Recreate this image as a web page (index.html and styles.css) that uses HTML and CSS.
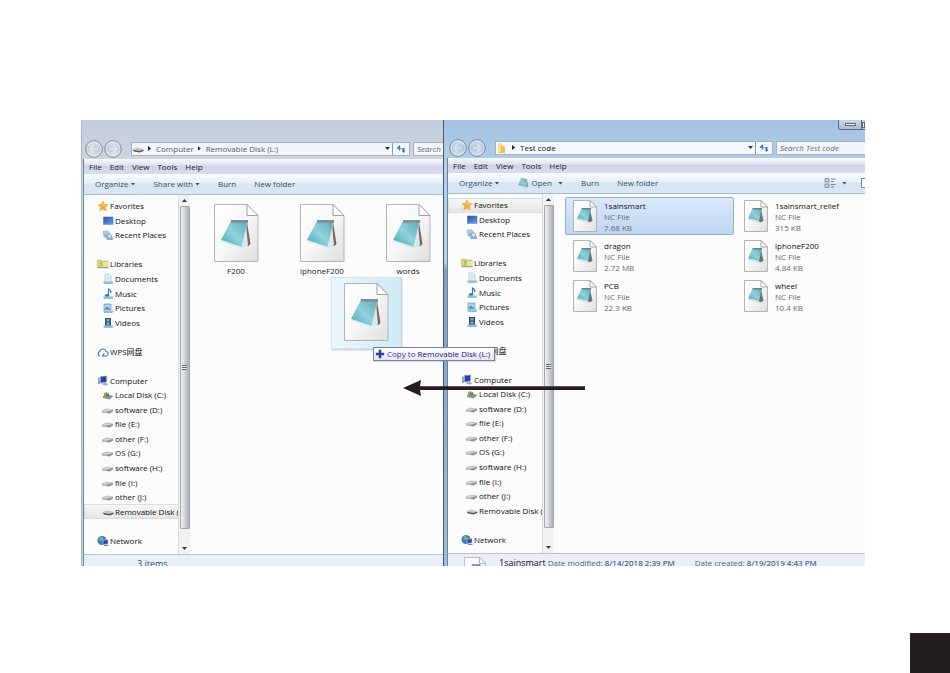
FILE: index.html
```html
<!DOCTYPE html>
<html lang="en">
<head>
<meta charset="utf-8">
<title>Copy to Removable Disk</title>
<link rel="stylesheet" href="styles.css">
</head>
<body>
<svg class="defs" aria-hidden="true">
  <defs>
    <linearGradient id="paper" x1="0" y1="0" x2="1" y2="1"><stop offset="0" stop-color="#fff"/><stop offset=".5" stop-color="#f7f7f7"/><stop offset="1" stop-color="#dedede"/></linearGradient>
    <linearGradient id="pad" x1="1" y1="0" x2="0" y2="1"><stop offset="0" stop-color="#5fa9b6"/><stop offset=".5" stop-color="#90d2dc"/><stop offset="1" stop-color="#4aa5b5"/></linearGradient>
    <linearGradient id="ring" x1="0" y1="0" x2="0" y2="1"><stop offset="0" stop-color="#fff" stop-opacity=".5"/><stop offset=".5" stop-color="#b5c2d0" stop-opacity=".4"/><stop offset="1" stop-color="#fff" stop-opacity=".5"/></linearGradient>
    <linearGradient id="screen" x1="0" y1="0" x2="1" y2="1"><stop offset="0" stop-color="#234fae"/><stop offset="1" stop-color="#6a9be8"/></linearGradient>
  </defs>
  <symbol id="i-file" viewBox="0 0 46 60">
    <path d="M1.500 1.500H34L45 13V58.500H1.500Z" fill="url(#paper)" stroke="#b4b4b4"/>
    <path d="M34 1.500V12.500H45Z" fill="#fff" stroke="#a0a0a0"/>
    <path d="M34 19L37.500 41L35.500 43L31 42Z" fill="#7a675a"/>
    <path d="M33 21L35 42L30 45L26 42Z" fill="#d9e8ea"/>
    <path d="M18 18L34 20L28.500 44L8 37Z" fill="url(#pad)"/>
    <path d="M8 37L28.500 44L28 45.500L8 38.500Z" fill="#d6eef2"/>
    <path d="M18 17H35V20L18 19.500Z" fill="#7f8f92"/>
  </symbol>
  <symbol id="i-tile" viewBox="0 0 24 32">
    <path d="M.5 .5H17L23.500 7V31.500H.5Z" fill="url(#paper)" stroke="#b4b4b4"/>
    <path d="M17 .5V7H23.500Z" fill="#fff" stroke="#a9a9a9"/>
    <path d="M17 9L19.500 21L16 22.500L14 20Z" fill="#66777a"/>
    <path d="M8.500 8.500L17.500 9.500L15 21L4 18.500Z" fill="url(#pad)"/>
    <path d="M4 18.500L15 21L14 23L5 20Z" fill="#c9e6ea"/>
    <path d="M8.500 8H18V10L8.500 9Z" fill="#6c8286"/>
  </symbol>
  <symbol id="i-note" viewBox="0 0 12 12"><path d="M4 1L10 2L8 10L1 8Z" fill="url(#pad)"/><path d="M10 2L11.500 10L8 10.500Z" fill="#8aa5ab"/></symbol>
  <symbol id="i-star" viewBox="0 0 12 12"><path d="M6 1L7.500 4.500L11 4.800L8.400 7.200L9.200 10.800L6 9L2.800 10.800L3.600 7.200L1 4.800L4.500 4.500Z" fill="#f7ad2e" stroke="#e29a35" stroke-width=".5"/><path d="M6 2.500L7 5H9.500L6 6Z" fill="#ffdd72"/></symbol>
  <symbol id="i-desktop" viewBox="0 0 12 12"><path d="M1.500 2H11V9.500H1.500Z" fill="url(#screen)" stroke="#4674bd" stroke-width=".6"/><path d="M1.500 8.800H11V9.800H1.500Z" fill="#8aaee0"/></symbol>
  <symbol id="i-recent" viewBox="0 0 12 12"><path d="M1 2H6L8 5V8H2Z" fill="#aacbe0" stroke="#8fb0c4" stroke-width=".6"/><path d="M3 6H9L11 10.500H5Z" fill="#91b9d2" stroke="#6b97b0" stroke-width=".6"/><circle cx="7.500" cy="7" r="2" fill="#dceef6" stroke="#6b97ae" stroke-width=".6"/></symbol>
  <symbol id="i-libs" viewBox="0 0 12 12"><path d="M.5 2H4L5 3H11V10H.5Z" fill="#f0cf62" stroke="#d3b354" stroke-width=".6"/><path d="M3 3.500H9V8H3Z" fill="#9ecb85"/><path d="M6 4H11.500V10H6Z" fill="#f6e48e"/><path d="M1 9.500H11.500" stroke="#69b1d0"/></symbol>
  <symbol id="i-docs" viewBox="0 0 12 12"><path d="M3 1H7L9 3V9H3Z" fill="#eaf2fb" stroke="#a5bbd3" stroke-width=".7"/><path d="M4.500 4H7.500M4.500 6H7.500" stroke="#a5bbd3" stroke-width=".6"/><path d="M1 8.500H11.500L10.500 11H2Z" fill="#93bfdb"/></symbol>
  <symbol id="i-music" viewBox="0 0 12 12"><path d="M6.500 8V1Q9 2 9 5" fill="none" stroke="#2879bd" stroke-width="1.200"/><ellipse cx="5" cy="7.500" rx="2.200" ry="1.600" fill="#2879bd"/><path d="M1 8.500H11.500L10.500 11H2Z" fill="#93bfdb"/></symbol>
  <symbol id="i-pics" viewBox="0 0 12 12"><path d="M2 2H9V8H2Z" fill="#a9d5ef" stroke="#6794ba" stroke-width=".7"/><path d="M2.500 7.500L5 4.500L8.500 7.500Z" fill="#4c8cb4"/><path d="M1 8.500H11.500L10.500 11H2Z" fill="#93bfdb"/></symbol>
  <symbol id="i-vids" viewBox="0 0 12 12"><path d="M3 1H9V9H3Z" fill="#2e5269"/><path d="M4.500 2H7.500V4.500H4.500ZM4.500 5.500H7.500V8H4.500Z" fill="#79a8c4"/><path d="M1 8.500H11.500L10.500 11H2Z" fill="#93bfdb"/></symbol>
  <symbol id="i-cloud" viewBox="0 0 12 12"><path d="M3 10A2.300 2.300 0 0 1 2.600 5.600A3.500 3.500 0 0 1 9.300 5.400A2.400 2.400 0 0 1 9.500 10H5.500L7.300 7.300" fill="none" stroke="#3778cf" stroke-width="1.100"/></symbol>
  <symbol id="i-pc" viewBox="0 0 12 12"><path d="M1 2.500H3V9H1Z" fill="#8fa7c9"/><path d="M3.500 1.500L9.500 1V7L3.500 8Z" fill="#2742a2" stroke="#8ea2d2" stroke-width=".6"/><path d="M6 7.500H8.500L11.500 9.500L8 10.500L5 9.500Z" fill="#9daec8"/></symbol>
  <symbol id="i-sys" viewBox="0 0 12 12"><path d="M1 7L5 5L11.500 7L7.500 10.500L1 9Z" fill="#8b9590"/><path d="M2 4L5 3L6 6L2 7Z" fill="#b79b43"/><path d="M4 5L7 4V7L4 7.500Z" fill="#548d57"/><circle cx="9" cy="8.300" r=".7" fill="#4c7"/></symbol>
  <symbol id="i-drive" viewBox="0 0 12 12"><path d="M.5 6.500L5 5L11 6L7.500 8.500L.5 8Z" fill="#d6d6d6" stroke="#a3a3a3" stroke-width=".6"/><path d="M5.500 7.500L11 6V7.500L7.500 9.500L.5 8.500V7.500Z" fill="#929292"/><path d="M1.500 7.800L4.500 8.200" stroke="#fff" stroke-width=".6"/></symbol>
  <symbol id="i-usb" viewBox="0 0 12 12"><path d="M.5 6L5 4.500L11.500 6L7.500 8.500Z" fill="#c6c6c6"/><path d="M.5 6.500L7 8L11.500 6.500V8L7.500 9.500L2 8.500Z" fill="#555"/></symbol>
  <symbol id="i-net" viewBox="0 0 12 12"><circle cx="5" cy="5.500" r="4.500" fill="#3f78c0"/><path d="M2 3Q5 0 6 3T3 6Z" fill="#6cb976"/><path d="M6 5L11 4.500V9L6 9.500Z" fill="#24479f" stroke="#b8cae4" stroke-width=".7"/><path d="M7 10H11.500V11H7Z" fill="#7189ae"/></symbol>
  <symbol id="i-folder" viewBox="0 0 12 12"><path d="M2 1H6V11H2Z" fill="#f6e28c"/><path d="M5 3L9 5V11H2L5 9Z" fill="#e9c14b"/></symbol>
  <symbol id="i-back" viewBox="0 0 18 18"><circle cx="9" cy="9" r="8.300" fill="url(#ring)" stroke="#7f8f9f"/><circle cx="9" cy="9" r="7" fill="none" stroke="#fff" stroke-opacity=".4"/><path d="M13 9H5M8.500 5.500L5 9L8.500 12.500" fill="none" stroke="#fff" stroke-opacity=".4" stroke-width="2"/></symbol>
  <symbol id="i-fwd" viewBox="0 0 18 18"><circle cx="9" cy="9" r="8.300" fill="url(#ring)" stroke="#7f8f9f"/><circle cx="9" cy="9" r="7" fill="none" stroke="#fff" stroke-opacity=".4"/><path d="M5 9H13M9.500 5.500L13 9L9.500 12.500" fill="none" stroke="#fff" stroke-opacity=".4" stroke-width="2"/></symbol>
  <symbol id="i-refresh" viewBox="0 0 12 12"><path d="M4.500 3V7.500" fill="none" stroke="#3475bd" stroke-width="1.200"/><path d="M1.500 5.500L4.500 2V5.500Z" fill="#3475bd"/><path d="M2 5.500H6M6 6H10" stroke="#5a8cc8"/><path d="M8.500 5V8" stroke="#2f62a6" stroke-width="1.200"/><path d="M7 7.500H10.500L8.500 10Z" fill="#2f62a6"/></symbol>
  <symbol id="i-view" viewBox="0 0 12 12"><path d="M1 1.500H5V5H1ZM1 7H5V10.500H1Z" fill="#c3d0de" stroke="#71859b" stroke-width=".8"/><path d="M7 2H11.500M7 4.500H10M7 7.500H11.500M7 10H10" stroke="#71859b"/></symbol>
  <symbol id="i-plus" viewBox="0 0 12 12"><path d="M4.500 1H7.500V4.500H11V7.500H7.500V11H4.500V7.500H1V4.500H4.500Z" fill="#2a3e96"/></symbol>
</svg>

<main class="desktop">
  <section class="window" aria-label="Removable Disk (L:)">
    <header class="address-row">
      <button class="nav" aria-label="Back"><svg><use href="#i-back"/></svg></button>
      <button class="nav" aria-label="Forward"><svg><use href="#i-fwd"/></svg></button>
      <div class="address">
        <svg class="icon"><use href="#i-usb"/></svg><i class="caret-right"></i><a href="#">Computer</a><i class="caret-right"></i><a href="#">Removable Disk (L:)</a>
        <i class="caret-down push"></i>
        <button class="refresh" aria-label="Refresh"><svg class="icon"><use href="#i-refresh"/></svg></button>
      </div>
      <input class="search" type="text" aria-label="Search disk" placeholder="Search">
    </header>
    <nav class="menu"><button>File</button><button>Edit</button><button>View</button><button>Tools</button><button>Help</button></nav>
    <div class="toolbar">
      <button>Organize<i class="caret-down"></i></button><button>Share with<i class="caret-down"></i></button><button>Burn</button><button>New folder</button>
    </div>
    <div class="content">
      <nav class="tree">
        <a class="top" href="#"><svg class="icon"><use href="#i-star"/></svg>Favorites</a>
        <a href="#"><svg class="icon"><use href="#i-desktop"/></svg>Desktop</a>
        <a href="#"><svg class="icon"><use href="#i-recent"/></svg>Recent Places</a>
        <span></span>
        <a class="top" href="#"><svg class="icon"><use href="#i-libs"/></svg>Libraries</a>
        <a href="#"><svg class="icon"><use href="#i-docs"/></svg>Documents</a>
        <a href="#"><svg class="icon"><use href="#i-music"/></svg>Music</a>
        <a href="#"><svg class="icon"><use href="#i-pics"/></svg>Pictures</a>
        <a href="#"><svg class="icon"><use href="#i-vids"/></svg>Videos</a>
        <span></span>
        <a class="top" href="#"><svg class="icon"><use href="#i-cloud"/></svg>WPS网盘</a>
        <span></span>
        <a class="top" href="#"><svg class="icon"><use href="#i-pc"/></svg>Computer</a>
        <a href="#"><svg class="icon"><use href="#i-sys"/></svg>Local Disk (C:)</a>
        <a href="#"><svg class="icon"><use href="#i-drive"/></svg>software (D:)</a>
        <a href="#"><svg class="icon"><use href="#i-drive"/></svg>file (E:)</a>
        <a href="#"><svg class="icon"><use href="#i-drive"/></svg>other (F:)</a>
        <a href="#"><svg class="icon"><use href="#i-drive"/></svg>OS (G:)</a>
        <a href="#"><svg class="icon"><use href="#i-drive"/></svg>software (H:)</a>
        <a href="#"><svg class="icon"><use href="#i-drive"/></svg>file (I:)</a>
        <a href="#"><svg class="icon"><use href="#i-drive"/></svg>other (J:)</a>
        <a class="current" href="#"><svg class="icon"><use href="#i-usb"/></svg>Removable Disk (</a>
        <span></span>
        <a class="top" href="#"><svg class="icon"><use href="#i-net"/></svg>Network</a>
      </nav>
      <div class="scroll"><i class="caret-up"></i><div class="thumb"><b></b></div><i class="caret-down"></i></div>
      <div class="icons">
        <figure><svg><use href="#i-file"/></svg><figcaption>F200</figcaption></figure>
        <figure><svg><use href="#i-file"/></svg><figcaption>iphoneF200</figcaption></figure>
        <figure><svg><use href="#i-file"/></svg><figcaption>words</figcaption></figure>
      </div>
    </div>
    <footer class="status"><span class="count">3 items</span></footer>
  </section>

  <section class="window active" aria-label="Test code">
    <div class="caption"><button aria-label="Minimize"><i class="min"></i></button><button aria-label="Maximize"><i class="max"></i></button></div>
    <header class="address-row">
      <button class="nav" aria-label="Back"><svg><use href="#i-back"/></svg></button>
      <button class="nav" aria-label="Forward"><svg><use href="#i-fwd"/></svg></button>
      <div class="address">
        <svg class="icon"><use href="#i-folder"/></svg><i class="caret-right"></i><a href="#">Test code</a>
        <i class="caret-down push"></i>
        <button class="refresh" aria-label="Refresh"><svg class="icon"><use href="#i-refresh"/></svg></button>
      </div>
      <input class="search" type="text" aria-label="Search Test code" placeholder="Search Test code">
    </header>
    <nav class="menu"><button>File</button><button>Edit</button><button>View</button><button>Tools</button><button>Help</button></nav>
    <div class="toolbar">
      <button>Organize<i class="caret-down"></i></button><button class="open"><svg class="icon"><use href="#i-note"/></svg>Open<i class="caret-down"></i></button><button>Burn</button><button>New folder</button>
      <button class="view push" aria-label="Change view"><svg class="icon"><use href="#i-view"/></svg><i class="caret-down"></i></button><button class="pane" aria-label="Preview pane"></button>
    </div>
    <div class="content">
      <nav class="tree">
        <a class="top current" href="#"><svg class="icon"><use href="#i-star"/></svg>Favorites</a>
        <a href="#"><svg class="icon"><use href="#i-desktop"/></svg>Desktop</a>
        <a href="#"><svg class="icon"><use href="#i-recent"/></svg>Recent Places</a>
        <span></span>
        <a class="top" href="#"><svg class="icon"><use href="#i-libs"/></svg>Libraries</a>
        <a href="#"><svg class="icon"><use href="#i-docs"/></svg>Documents</a>
        <a href="#"><svg class="icon"><use href="#i-music"/></svg>Music</a>
        <a href="#"><svg class="icon"><use href="#i-pics"/></svg>Pictures</a>
        <a href="#"><svg class="icon"><use href="#i-vids"/></svg>Videos</a>
        <span></span>
        <a class="top" href="#"><svg class="icon"><use href="#i-cloud"/></svg>WPS网盘</a>
        <span></span>
        <a class="top" href="#"><svg class="icon"><use href="#i-pc"/></svg>Computer</a>
        <a href="#"><svg class="icon"><use href="#i-sys"/></svg>Local Disk (C:)</a>
        <a href="#"><svg class="icon"><use href="#i-drive"/></svg>software (D:)</a>
        <a href="#"><svg class="icon"><use href="#i-drive"/></svg>file (E:)</a>
        <a href="#"><svg class="icon"><use href="#i-drive"/></svg>other (F:)</a>
        <a href="#"><svg class="icon"><use href="#i-drive"/></svg>OS (G:)</a>
        <a href="#"><svg class="icon"><use href="#i-drive"/></svg>software (H:)</a>
        <a href="#"><svg class="icon"><use href="#i-drive"/></svg>file (I:)</a>
        <a href="#"><svg class="icon"><use href="#i-drive"/></svg>other (J:)</a>
        <a href="#"><svg class="icon"><use href="#i-usb"/></svg>Removable Disk (</a>
        <span></span>
        <a class="top" href="#"><svg class="icon"><use href="#i-net"/></svg>Network</a>
      </nav>
      <div class="scroll"><i class="caret-up"></i><div class="thumb"><b></b></div><i class="caret-down"></i></div>
      <div class="tiles">
        <article class="tile selected"><svg><use href="#i-tile"/></svg><p><strong>1sainsmart</strong>NC File<br>7.68 KB</p></article>
        <article class="tile"><svg><use href="#i-tile"/></svg><p><strong>1sainsmart_relief</strong>NC File<br>315 KB</p></article>
        <article class="tile"><svg><use href="#i-tile"/></svg><p><strong>dragon</strong>NC File<br>2.72 MB</p></article>
        <article class="tile"><svg><use href="#i-tile"/></svg><p><strong>iphoneF200</strong>NC File<br>4.84 KB</p></article>
        <article class="tile"><svg><use href="#i-tile"/></svg><p><strong>PCB</strong>NC File<br>22.3 KB</p></article>
        <article class="tile"><svg><use href="#i-tile"/></svg><p><strong>wheel</strong>NC File<br>10.4 KB</p></article>
      </div>
    </div>
    <footer class="status"><svg class="doc"><use href="#i-tile"/></svg><span class="name">1sainsmart</span><span>Date modified: <b>8/14/2018 2:39 PM</b></span><span class="created">Date created: <b>8/19/2019 4:43 PM</b></span></footer>
  </section>

  <div class="drag"><svg><use href="#i-file"/></svg></div>
  <div class="tip"><svg class="icon"><use href="#i-plus"/></svg><span>Copy to <b>Removable Disk (L:)</b></span></div>
  <svg class="arrow" viewBox="0 0 182 16"><path d="M0 8L18 0L17 6.200H182V10H17L18 16Z" fill="#231f20"/></svg>
</main>
<div class="page-tab"></div>
</body>
</html>
```
FILE: styles.css
```css
* { box-sizing: border-box; }
body {
  margin: 0;
  height: 100vh;
  padding: 120px 85px 107px 81px;
  background: #fff;
  color: #222;
  font: 8px/12px "Open Sans", "Noto Sans CJK SC", sans-serif;
}
button, input { font: inherit; color: inherit; border: 0; background: none; padding: 0; margin: 0; }
a { color: inherit; text-decoration: none; }
svg { display: block; flex: none; }
figure, p { margin: 0; }
.defs { position: absolute; width: 0; height: 0; }
.icon { width: 12px; height: 12px; }

.desktop {
  position: relative;
  height: 100%;
  display: grid;
  grid-template-columns: 362fr 422fr;
  grid-template-rows: minmax(0, 1fr);
  overflow: hidden;
}
.window {
  min-width: 0;
  min-height: 0;
  display: flex;
  flex-direction: column;
  padding-left: 2px;
  padding-top: 18px;
  background: linear-gradient(#c3cedc, #ccd5e0 40px, #c3d0e0);
  box-shadow: inset 1px 0 #a9bccf;
  overflow: hidden;
}
.window.active {
  position: relative;
  padding-top: 17px;
  padding-left: 3px;
  border-left: 1px solid #46586c;
  background: linear-gradient(#a3c3e2, #b1cde8 40px, #b9d2ea 142px, #7f9fc6 150px, #9fbddf);
  box-shadow: none;
}
.address-row { height: 21px; flex: none; display: flex; align-items: center; padding-left: 2px; }
.nav { width: 18px; height: 18px; margin-right: 1px; }
.nav svg { width: 18px; height: 18px; }
.address {
  flex: 1;
  min-width: 0;
  height: 14px;
  margin-left: 8px;
  display: flex;
  align-items: center;
  background: #f2f5fa;
  border: 1px solid #a5b1bf;
  color: #5a5a5a;
}
.active .address { background: #f3f8fd; color: #222; }
.address .caret-right { margin: 0 5px 0 4px; }
.refresh { height: 12px; padding: 0 2px; margin-left: 2px; border-left: 1px solid #8c9bac; }
.search {
  width: 30px;
  height: 14px;
  margin-left: 3px;
  padding-left: 3px;
  background: #f2f5fa;
  border: 1px solid #a5b1bf;
  border-right: 0;
  font-style: italic;
}
.active .search { width: 89px; }
.search::placeholder { color: #666; opacity: 1; }
.menu {
  height: 15px;
  flex: none;
  display: flex;
  gap: 8px;
  padding-left: 5px;
  background: linear-gradient(#fafbfe, #dfe3f2 40%, #cfd4e9 50%, #d8dcef);
  border-left: 1px solid #6f8396;
  color: #222;
}
.toolbar {
  height: 21px;
  flex: none;
  display: flex;
  gap: 18px;
  padding-left: 11px;
  background: linear-gradient(#fbfdff, #e6eef8 45%, #d8e4f3 50%, #dae6f4);
  border-left: 1px solid #6f8396;
  border-bottom: 1px solid #a9bbd0;
  color: #34506e;
}
.toolbar button { display: flex; align-items: center; gap: 2px; }
.open .caret-down { margin-left: 4px; }
.toolbar .view { gap: 6px; }
.toolbar .pane { width: 4px; height: 10px; align-self: center; margin-left: -4px; background: #fff; border: 1px solid #71859b; border-right: 0; }
.toolbar .push, .push { margin-left: auto; }

.caret-down, .caret-up { width: 5px; height: 3px; background: #333; clip-path: polygon(0 0, 100% 0, 50% 100%); flex: none; }
.caret-up { clip-path: polygon(50% 0, 100% 100%, 0 100%); }
.toolbar .caret-down { background: #34506e; }
.caret-right { width: 3px; height: 5px; background: #222; clip-path: polygon(0 0, 100% 50%, 0 100%); flex: none; }

.content { flex: 1; min-height: 0; display: flex; background: #fcfcfc; border-left: 1px solid #6f8396; }
.tree {
  width: 94px;
  flex: none;
  display: grid;
  grid-template-rows: repeat(24, minmax(0, 1fr));
  padding: 4px 0 6px;
  white-space: nowrap;
  overflow: hidden;
}
.tree a { display: flex; align-items: center; gap: 1px; padding-left: 18px; min-height: 0; color: #111; }
.tree .top { padding-left: 13px; }
.tree .current { background: linear-gradient(#f8f8f8, #e4e4e4); box-shadow: inset 0 0 0 1px #dedede; }
.scroll {
  width: 12px;
  flex: none;
  display: flex;
  flex-direction: column;
  align-items: center;
  justify-content: space-between;
  gap: 4px;
  padding: 4px 1px;
  background: #f2f2f2;
  border-left: 1px solid #ddd;
}
.thumb {
  flex: 1;
  width: 10px;
  display: grid;
  place-items: center;
  margin-bottom: 14px;
  border: 1px solid #a2a6ac;
  border-radius: 1px;
  background: linear-gradient(90deg, #f2f3f5, #d3d6db 45%, #a9aeb8);
}
.thumb b { width: 5px; height: 5px; background: repeating-linear-gradient(#666 0 1px, #eee 1px 2px); }
.icons { flex: 1; min-width: 0; display: grid; grid-template-columns: repeat(3, 86px); align-content: start; padding: 8px 0 0 3px; overflow: hidden; }
.icons figure { display: flex; flex-direction: column; align-items: center; gap: 2px; }
.icons svg { width: 46px; height: 60px; }
.tiles { flex: 1; min-width: 0; display: grid; grid-template-columns: 169px 127px; grid-auto-rows: 38px; gap: 2px; align-content: start; padding: 3px 0 0 11px; overflow: hidden; }
.tile { display: flex; align-items: center; gap: 7px; padding-left: 7px; border: 1px solid transparent; color: #6b6b6b; line-height: 11px; }
.tile.selected { background: linear-gradient(#dbe9fa, #bed5f1); border-color: #8eb0d9; border-radius: 2px; }
.tile svg { width: 24px; height: 32px; }
.tile strong { display: block; font-weight: 400; color: #111; }
.status {
  height: 12px;
  flex: none;
  display: flex;
  padding-top: 3px;
  background: #e9effa;
  border-left: 1px solid #6f8396;
  border-top: 1px solid #b9c5d5;
  color: #5b6a7a;
  overflow: hidden;
  white-space: nowrap;
}
.active .status { height: 13px; padding-left: 16px; }
.count { padding-left: 53px; font-size: 9px; color: #34506e; }
.status b { font-weight: 400; color: #1f3a56; }
.doc { width: 22px; height: 29px; }
.name { margin: 0 2px 0 13px; font-size: 9px; color: #111; }
.created { margin-left: 20px; }

.caption { position: absolute; top: 0; right: 0; display: flex; border: 1px solid #5a6d83; border-top: 0; border-right: 0; border-radius: 0 0 0 3px; overflow: hidden; }
.caption button { width: 22px; height: 9px; display: grid; place-items: center; background: linear-gradient(#c9d8e7, #a9bed3); }
.caption button + button { width: 4px; border-left: 1px solid #5a6d83; }
.min { width: 11px; height: 3px; background: #fff; border: 1px solid #596879; }
.max { width: 3px; height: 6px; background: #fff; border: 1px solid #596879; }

.drag { position: absolute; left: 250px; top: 157px; padding: 4px 11px 6px; background: linear-gradient(90deg, #e9f6fbcc, #c4e6f3cc); border: 1px solid #d3e6ed; box-shadow: 1px 1px 2px #b5c4cc; }
.drag svg { width: 46px; height: 60px; }
.tip { position: absolute; left: 292px; top: 227px; display: flex; align-items: center; gap: 2px; height: 14px; padding: 0 4px 0 1px; border: 1px solid #7b7f9c; background: linear-gradient(#fff, #e3e6f3); color: #32409a; white-space: nowrap; box-shadow: 1px 1px 1px #9995; }
.tip b { font-weight: 400; color: #14186a; }
.tip .icon { width: 10px; height: 10px; }
.arrow { position: absolute; left: 322px; top: 260px; width: 182px; height: 16px; }
.page-tab { position: absolute; right: 0; bottom: 0; width: 40px; height: 40px; background: #231f20; }
```
